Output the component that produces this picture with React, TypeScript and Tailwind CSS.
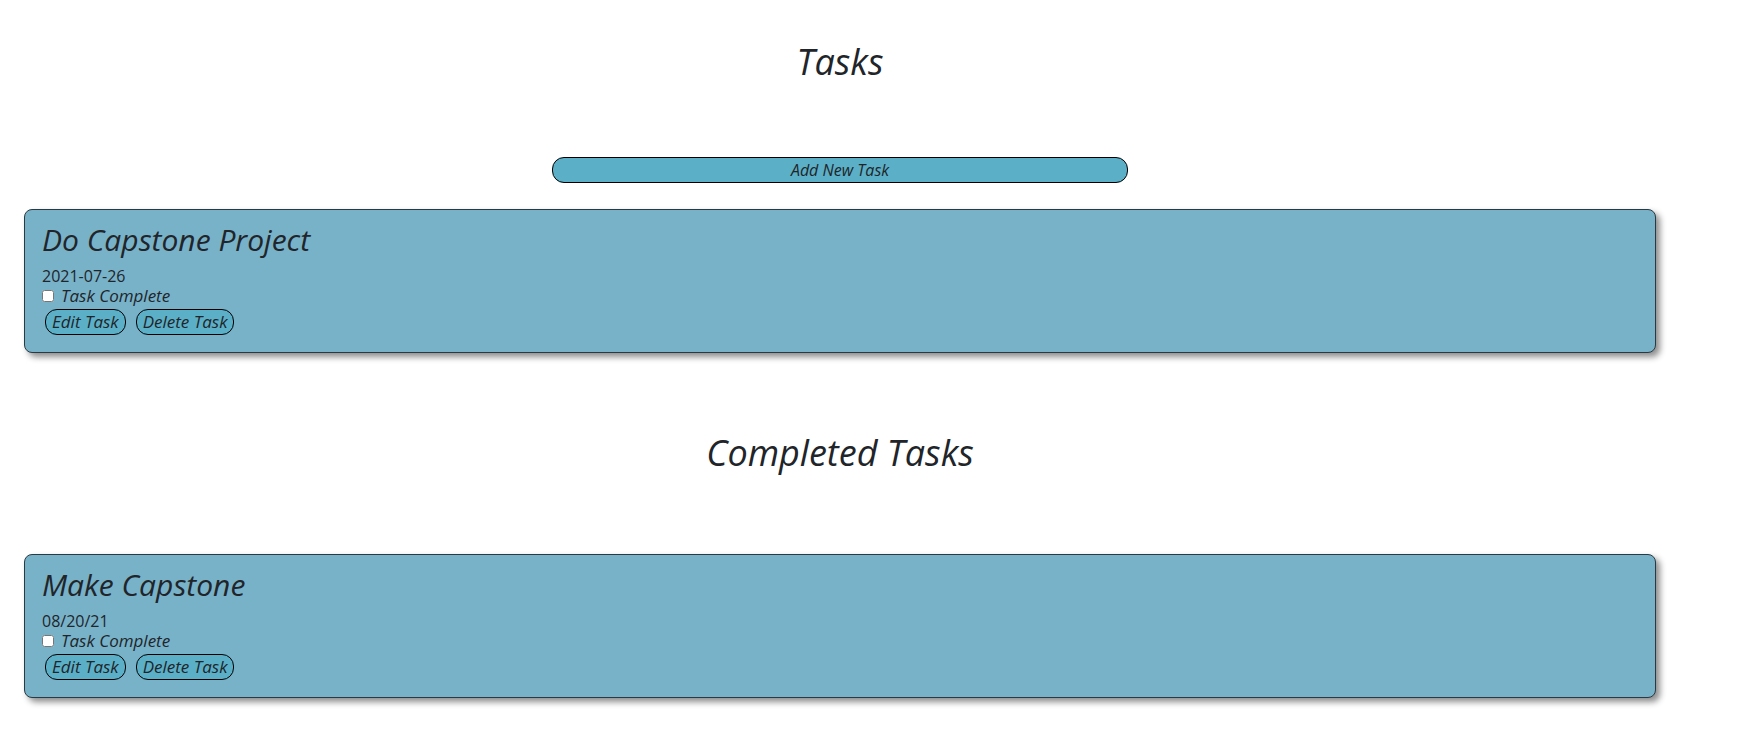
import React from "react";

type Task = { title: string; date: string };

const tasks: Task[] = [{ title: "Do Capstone Project", date: "2021-07-26" }];
const completed: Task[] = [{ title: "Make Capstone", date: "08/20/21" }];

const TaskCard = ({ task }: { task: Task }) => (
  <div className="rounded-[8px] border border-[#2b3a40] bg-[#78b2c9] px-[17px] pt-[12px] pb-[17px] shadow-[4px_4px_6px_rgba(0,0,0,0.45)]">
    <h3 className="text-[30px] leading-[36px] italic">{task.title}</h3>
    <p className="mt-[8px] text-[16px] leading-[20px] not-italic">{task.date}</p>
    <label className="flex h-[20px] items-center gap-[7px] text-[17px] italic">
      <input type="checkbox" className="h-[12px] w-[12px]" />
      Task Complete
    </label>
    <div className="mt-[3px] flex gap-[10px] pl-[3px]">
      <button className="h-[26px] rounded-[12px] border border-black bg-[#5bb0c8] px-[6px] text-[17px] leading-[20px] italic">
        Edit Task
      </button>
      <button className="h-[26px] rounded-[12px] border border-black bg-[#5bb0c8] px-[6px] text-[17px] leading-[20px] italic">
        Delete Task
      </button>
    </div>
  </div>
);

export default function App() {
  return (
    <div className="min-h-screen bg-white pl-[24px] pr-[85px] pt-[40px] pb-[20px] text-[#212529] font-['Open_Sans',sans-serif]">
      <h1 className="h-[44px] text-center text-[36px] leading-[44px] italic">Tasks</h1>
      <button className="mx-auto mt-[73px] block h-[26px] w-[576px] rounded-[12px] border border-black bg-[#5bb0c8] text-[16px] leading-[20px] italic">
        Add New Task
      </button>
      <div className="mt-[26px] flex flex-col gap-4">
        {tasks.map((t) => (
          <TaskCard key={t.title} task={t} />
        ))}
      </div>
      <h2 className="mt-[78px] h-[44px] text-center text-[36px] leading-[44px] italic">Completed Tasks</h2>
      <div className="mt-[79px] flex flex-col gap-4">
        {completed.map((t) => (
          <TaskCard key={t.title} task={t} />
        ))}
      </div>
    </div>
  );
}
